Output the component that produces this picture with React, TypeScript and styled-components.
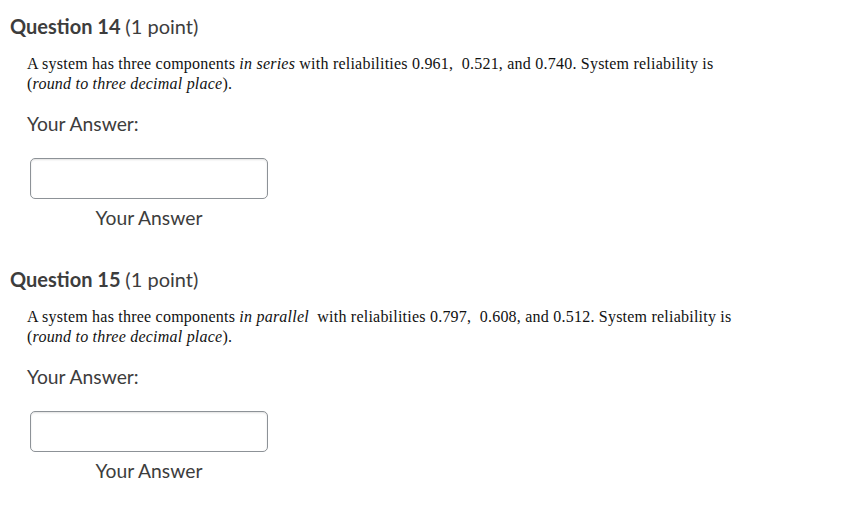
import React from "react";
import styled, { createGlobalStyle } from "styled-components";

const Global = createGlobalStyle`
  html, body { margin: 0; padding: 0; background: #ffffff; }
  body { font-family: Lato, "Open Sans", sans-serif; }
`;

const Page = styled.div`
  width: 856px;
  height: 515px;
  padding: 14px 0 0 10px;
  box-sizing: border-box;
  display: flex;
  flex-direction: column;
  gap: 38px;
  overflow: hidden;
`;

const Question = styled.section`
  display: flex;
  flex-direction: column;
`;

const Heading = styled.h2`
  margin: 0;
  font-family: Lato, sans-serif;
  font-size: 20px;
  line-height: 24px;
  font-weight: 700;
  color: #3d3d3d;
  span { font-weight: 400; }
`;

const Body = styled.p`
  margin: 16px 0 0 17px;
  font-family: "Liberation Serif", "Times New Roman", serif;
  font-size: 16px;
  line-height: 20px;
  letter-spacing: 0.22px;
  color: #111;
  em { font-style: italic; }
`;

const AnswerTitle = styled.div`
  margin: 18px 0 0 17px;
  font-family: Lato, sans-serif;
  font-size: 19.3px;
  line-height: 23px;
  color: #3d3d3d;
`;

const AnswerBlock = styled.div`
  margin: 23px 0 0 20px;
  width: 238px;
  display: flex;
  flex-direction: column;
  align-items: center;
  gap: 7px;
`;

const Input = styled.input`
  width: 238px;
  height: 41px;
  box-sizing: border-box;
  border: 1px solid #8d9297;
  border-radius: 5px;
  box-shadow: inset 0 1px 2px rgba(0, 0, 0, 0.12);
  background: #fff;
  outline: none;
`;

const Caption = styled.div`
  font-family: Lato, sans-serif;
  font-size: 19.3px;
  line-height: 23px;
  color: #3d3d3d;
`;

type Q = { num: number; mode: string; r: [string, string, string] };

const questions: Q[] = [
  { num: 14, mode: "in series", r: ["0.961", "0.521", "0.740"] },
  { num: 15, mode: "in parallel", r: ["0.797", "0.608", "0.512"] },
];

export default function App() {
  return (
    <>
      <Global />
      <Page>
        {questions.map((q) => (
          <Question key={q.num}>
            <Heading>
              Question {q.num} <span>(1 point)</span>
            </Heading>
            <Body>
              A system has three components <em>{q.mode}</em>
              {q.num === 15 ? "\u00a0 " : " "}with reliabilities {q.r[0]},{"\u00a0 "}
              {q.r[1]}, and {q.r[2]}. System reliability is
              <br />
              (<em>round to three decimal place</em>).
            </Body>
            <AnswerTitle>Your Answer:</AnswerTitle>
            <AnswerBlock>
              <Input type="text" aria-label="Your Answer" />
              <Caption>Your Answer</Caption>
            </AnswerBlock>
          </Question>
        ))}
      </Page>
    </>
  );
}
